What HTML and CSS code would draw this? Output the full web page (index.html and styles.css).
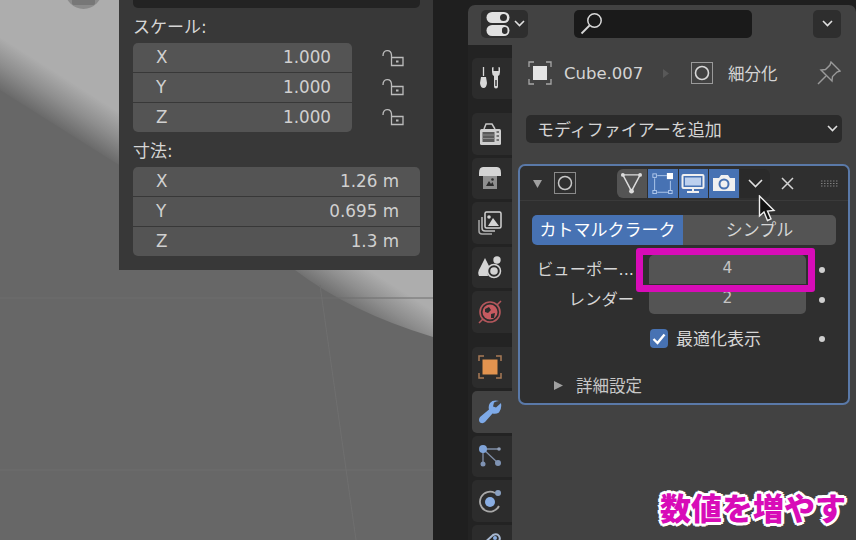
FILE: index.html
```html
<!DOCTYPE html>
<html>
<head>
<meta charset="utf-8">
<link rel="stylesheet" href="styles.css">
</head>
<body>
<div class="screen">
    <div class="viewport">
        <!-- 3D scene behind the sidebar -->
        <svg class="scene" width="433" height="540" viewBox="0 0 433 540">
            <defs>
                <linearGradient id="shade" gradientUnits="userSpaceOnUse" x1="0" y1="90" x2="24" y2="52">
                    <stop offset="0" stop-color="#6a6a6a"/>
                    <stop offset="0.5" stop-color="#8e8e8e"/>
                    <stop offset="1" stop-color="#adadad"/>
                </linearGradient>
            </defs>
            <rect width="433" height="540" fill="#676767"/>
            <path d="M0 0V90L119 165L295 270Q350 312 433 337V0Z" fill="url(#shade)"/>
            <path d="M0 298H433M0 470H433M320 285L356 540" stroke="#6f6f6f" fill="none"/>
            <circle cx="83.5" cy="-9.5" r="18.5" fill="#8b8b8b"/>
            <rect x="72" y="-6" width="23" height="11" rx="2" fill="#777"/>
        </svg>

        <div class="sidebar">
            <div class="stub"></div>
            <div class="group-label">スケール:</div>
            <div class="scale-row">
                <div class="fields fields-short">
                    <div class="num"><span>X</span><span>1.000</span></div>
                    <div class="num"><span>Y</span><span>1.000</span></div>
                    <div class="num"><span>Z</span><span>1.000</span></div>
                </div>
                <div class="locks">
                    <svg width="22" height="18" viewBox="0 0 22 18"><path d="M1 7C1 0 9 0 9.500 6V8.500M9.500 8.500H21V16.500H9.500Z" fill="none" stroke="#bcbcbc" stroke-width="1.300"/><rect x="14" y="11.500" width="2.500" height="2" fill="#bcbcbc"/></svg>
                    <svg width="22" height="18" viewBox="0 0 22 18"><path d="M1 7C1 0 9 0 9.500 6V8.500M9.500 8.500H21V16.500H9.500Z" fill="none" stroke="#bcbcbc" stroke-width="1.300"/><rect x="14" y="11.500" width="2.500" height="2" fill="#bcbcbc"/></svg>
                    <svg width="22" height="18" viewBox="0 0 22 18"><path d="M1 7C1 0 9 0 9.500 6V8.500M9.500 8.500H21V16.500H9.500Z" fill="none" stroke="#bcbcbc" stroke-width="1.300"/><rect x="14" y="11.500" width="2.500" height="2" fill="#bcbcbc"/></svg>
                </div>
            </div>
            <div class="group-label">寸法:</div>
            <div class="fields">
                <div class="num"><span>X</span><span>1.26 m</span></div>
                <div class="num"><span>Y</span><span>0.695 m</span></div>
                <div class="num"><span>Z</span><span>1.3 m</span></div>
            </div>
        </div>
    </div>

    <div class="editor">
        <div class="editor-head">
            <div class="head-btn type-btn">
                <svg width="24" height="26" viewBox="0 0 24 26"><rect x="0.500" y="1" width="23" height="11" rx="5.500" fill="#e0e0e0"/><rect x="14" y="3" width="7" height="7" rx="3.500" fill="#2e2e2e"/><rect x="0.500" y="14" width="23" height="11" rx="5.500" fill="#e0e0e0"/><rect x="16" y="16" width="5.500" height="7" rx="2.700" fill="#2e2e2e"/></svg>
                <svg width="11" height="7" viewBox="0 0 11 7"><path d="M1 1L5.500 5.500L10 1" fill="none" stroke="#e0e0e0" stroke-width="1.600"/></svg>
            </div>
            <div class="search">
                <svg width="23" height="23" viewBox="0 0 23 23"><circle cx="14.500" cy="8.500" r="6.700" fill="none" stroke="#d8d8d8" stroke-width="1.500"/><path d="M9.500 13.500L1.500 21.500" stroke="#d8d8d8" stroke-width="1.800"/></svg>
            </div>
            <div class="head-btn opt-btn">
                <svg width="11" height="7" viewBox="0 0 11 7"><path d="M1 1L5.500 5.500L10 1" fill="none" stroke="#e0e0e0" stroke-width="1.600"/></svg>
            </div>
        </div>

        <div class="editor-body">
            <div class="tabs">
                <div class="tab">
                    <svg width="24" height="24" viewBox="0 0 24 24"><path d="M5.500 1V10" stroke="#d8d8d8" stroke-width="1.300"/><path d="M3 11H8L9 17Q8.500 22 5.500 22Q2.500 22 2 17Z" fill="#d8d8d8"/><path d="M14 1.500V6Q14 9 16 10V20.500Q16 22.500 18 22.500Q20 22.500 20 20.500V10Q22 9 22 6V1.500L20.500 1V5H15.500V1Z" fill="#d8d8d8"/><rect x="17.300" y="14" width="1.400" height="6" fill="#2c2c2c"/></svg>
                </div>
                <div class="tab tab-gap">
                    <svg width="24" height="24" viewBox="0 0 24 24"><path d="M6 7L8 2H14L17 7" fill="none" stroke="#c8c8c8" stroke-width="1.500"/><rect x="2" y="7" width="21" height="16" rx="1.500" fill="#cfcfcf"/><rect x="4.500" y="10" width="12" height="10" fill="#5a5a5a"/><path d="M4.500 13H16.500M4.500 16.500H16.500" stroke="#8a8a8a"/><path d="M18.500 10H21M18.500 14H21M18.500 18H21" stroke="#5a5a5a" stroke-width="1.500"/></svg>
                </div>
                <div class="tab">
                    <svg width="24" height="24" viewBox="0 0 24 24"><path d="M1 7Q1 1 5 1H19Q23 1 23 7V10H1Z" fill="#d4d4d4"/><path d="M5 10H19V23H5Z" fill="#8f8f8f"/><path d="M8 20L11 15L13 18L14.500 16L16 20Z" fill="#2c2c2c"/><circle cx="14.500" cy="13.500" r="1.300" fill="#2c2c2c"/></svg>
                </div>
                <div class="tab">
                    <svg width="24" height="24" viewBox="0 0 24 24"><path d="M1 9V20Q1 23 4 23H14" fill="none" stroke="#a8a8a8" stroke-width="1.500"/><path d="M4 6V17Q4 20 7 20H17" fill="none" stroke="#c0c0c0" stroke-width="1.500"/><rect x="7" y="1" width="16" height="16" rx="1.500" fill="#2c2c2c" stroke="#d4d4d4" stroke-width="1.500"/><path d="M10 15L15 7L21 15Z" fill="#d4d4d4"/><circle cx="11" cy="6" r="1.800" fill="#d4d4d4"/></svg>
                </div>
                <div class="tab">
                    <svg width="24" height="24" viewBox="0 0 24 24"><path d="M7 3L12 13Q9 17 10 21H1Q-1 17 2 13Z" fill="#d4d4d4"/><circle cx="19" cy="5" r="3.700" fill="#d4d4d4"/><circle cx="16" cy="16" r="6.500" fill="#2c2c2c" stroke="#d4d4d4" stroke-width="1.500"/><circle cx="16" cy="16" r="3.800" fill="#d4d4d4"/></svg>
                </div>
                <div class="tab">
                    <svg width="24" height="24" viewBox="0 0 24 24"><circle cx="12" cy="12" r="10" fill="none" stroke="#b4575c" stroke-width="1.600"/><circle cx="12" cy="12" r="7.500" fill="#c65a60"/><path d="M7 9L11 7L13 10L10 13L7 12ZM13 14L17 13L16 18L13 18Z" fill="#2c2c2c"/><path d="M1 23L5 19M19 5L23 1" stroke="#b4575c" stroke-width="1.600"/></svg>
                </div>
                <div class="tab tab-gap">
                    <svg width="24" height="24" viewBox="0 0 24 24"><path d="M1 6V1H6M18 1H23V6M23 18V23H18M6 23H1V18" fill="none" stroke="#a87a55" stroke-width="1.500"/><rect x="4.500" y="4.500" width="15" height="15" fill="#e2934f"/></svg>
                </div>
                <div class="tab tab-active">
                    <svg width="24" height="24" viewBox="0 0 24 24"><path d="M23 3L18 7.500L15 6.500L16 2.500Q18 1 21 1Q15 -.5 12 3Q10 6 11 9.500L2 17Q0 20 2 22.500Q5 24 7 22L14.500 13.500Q18 14.500 21 12.500Q24 9 23 3Z" fill="#7eaae8"/></svg>
                </div>
                <div class="tab">
                    <svg width="24" height="24" viewBox="0 0 24 24"><path d="M5 5H21M5 5V20M5 5L20 19" stroke="#7f8da5" stroke-width="1.300"/><circle cx="5" cy="5" r="4" fill="#7fa3d8"/><circle cx="21" cy="5" r="1.800" fill="#8f9db5"/><circle cx="5" cy="20" r="2.500" fill="#7f93b3"/><circle cx="20" cy="19" r="3" fill="#7f93b3"/></svg>
                </div>
                <div class="tab">
                    <svg width="24" height="24" viewBox="0 0 24 24"><path d="M17 4A10 10 0 1 0 21 17" fill="none" stroke="#a8a8a8" stroke-width="1.800"/><circle cx="12" cy="13" r="5" fill="#8aaee2"/><circle cx="20" cy="4" r="3" fill="#8aa0c0"/></svg>
                </div>
                <div class="tab">
                    <svg width="24" height="24" viewBox="0 0 24 24"><path d="M3 13L15 2Q19 0 21 3Q23 6 20 9L8 20" fill="none" stroke="#a8b8d0" stroke-width="2"/><circle cx="17" cy="5" r="2" fill="#8aaee2"/></svg>
                </div>
            </div>

            <div class="content">
                <div class="crumbs">
                    <svg class="crumb-obj" width="24" height="24" viewBox="0 0 24 24"><path d="M1 6V1H6M18 1H23V6M23 18V23H18M6 23H1V18" fill="none" stroke="#a8a8a8" stroke-width="1.300"/><rect x="5" y="5" width="14" height="14" fill="#e4e4e4"/></svg>
                    <span class="crumb-name">Cube.007</span>
                    <svg class="crumb-sep" width="6" height="9" viewBox="0 0 6 9"><path d="M0 0L6 4.500L0 9Z" fill="#585858"/></svg>
                    <svg class="crumb-mod" width="22" height="22" viewBox="0 0 22 22"><rect x="0.500" y="0.500" width="21" height="21" fill="none" stroke="#9a9a9a"/><circle cx="11" cy="11" r="6.500" fill="none" stroke="#d8d8d8" stroke-width="1.600"/></svg>
                    <span class="crumb-label">細分化</span>
                    <svg class="pin" width="24" height="24" viewBox="0 0 24 24"><path d="M14 1L23 10L20 11L15.500 15.500L15 20L4 9L8.500 8.500L13 4Z" fill="none" stroke="#9a9a9a" stroke-width="1.400"/><path d="M9 15L1 23" stroke="#9a9a9a" stroke-width="1.400"/></svg>
                </div>

                <div class="add-mod">
                    <span>モディファイアーを追加</span>
                    <svg width="11" height="7" viewBox="0 0 11 7"><path d="M1 1L5.500 5.500L10 1" fill="none" stroke="#e0e0e0" stroke-width="1.600"/></svg>
                </div>

                <div class="mod-panel">
                    <div class="mod-head">
                        <svg class="tri-down" width="9" height="9" viewBox="0 0 9 9"><path d="M0 1H9L4.500 9Z" fill="#a0a0a0"/></svg>
                        <svg class="mod-icon" width="22" height="22" viewBox="0 0 22 22"><rect x="0.500" y="0.500" width="21" height="21" fill="none" stroke="#8a8a8a"/><circle cx="11" cy="11" r="6.500" fill="none" stroke="#c8c8c8" stroke-width="1.500"/></svg>
                        <div class="mod-btns">
                            <div class="mod-btn">
                                <svg width="23" height="23" viewBox="0 0 24 24"><path d="M3 3H21L12 20Z" fill="none" stroke="#dcdcdc" stroke-width="1.500"/><circle cx="3" cy="3" r="2" fill="#dcdcdc"/><circle cx="21" cy="3" r="2" fill="#dcdcdc"/><circle cx="12" cy="20" r="2.500" fill="#dcdcdc"/></svg>
                            </div>
                            <div class="mod-btn on">
                                <svg width="21" height="21" viewBox="0 0 24 24"><path d="M6 3H17M3 6V20M21 9V20M6 22H19" fill="none" stroke="#b8cff0"/><rect x="1" y="1" width="4" height="4" fill="none" stroke="#b8cff0"/><rect x="17" y="0" width="7" height="7" fill="#fff"/><rect x="1" y="20" width="4" height="3.500" fill="none" stroke="#b8cff0"/><rect x="19" y="20" width="4" height="3.500" fill="none" stroke="#b8cff0"/></svg>
                            </div>
                            <div class="mod-btn on">
                                <svg width="24" height="24" viewBox="0 0 24 24"><rect x="1.500" y="4" width="21" height="13" rx="1" fill="none" stroke="#f0f0f0" stroke-width="2"/><rect x="4" y="6.500" width="16" height="8" fill="#bcd0ee"/><path d="M12 17V20M6 21H18" stroke="#f0f0f0" stroke-width="2"/></svg>
                            </div>
                            <div class="mod-btn on">
                                <svg width="24" height="24" viewBox="0 0 24 24"><path d="M1 7H7L9 4H16L18 7H23V20H1Z" fill="#f0f0f0"/><circle cx="12" cy="13" r="5.500" fill="#4772b3"/><circle cx="12" cy="13" r="3.500" fill="#f0f0f0"/></svg>
                            </div>
                            <div class="mod-btn dark">
                                <svg width="15" height="9" viewBox="0 0 15 9"><path d="M1 1L7.500 7.500L14 1" fill="none" stroke="#e0e0e0" stroke-width="1.600"/></svg>
                            </div>
                        </div>
                        <svg class="mod-x" width="13" height="13" viewBox="0 0 13 13"><path d="M1 1L12 12M12 1L1 12" stroke="#d4d4d4" stroke-width="1.500"/></svg>
                        <svg class="mod-grip" width="17" height="7" viewBox="0 0 17 7"><path d="M0 1H17M0 3.500H17M0 6H17" stroke="#808080" stroke-dasharray="1.500 1.500"/></svg>
                    </div>

                    <div class="mode-tabs">
                        <div class="mode mode-on">カトマルクラーク</div>
                        <div class="mode">シンプル</div>
                    </div>

                    <div class="level-rows">
                        <div class="level-row">
                            <div class="level-label">ビューポー...</div>
                            <div class="level-field level-top marked">4</div>
                            <div class="dot"></div>
                        </div>
                        <div class="level-row">
                            <div class="level-label">レンダー</div>
                            <div class="level-field level-bottom">2</div>
                            <div class="dot"></div>
                        </div>
                    </div>

                    <div class="check-row">
                        <div class="check">
                            <svg width="14" height="12" viewBox="0 0 14 12"><path d="M1.500 6L5.500 10L12.500 1.500" fill="none" stroke="#fff" stroke-width="2.400"/></svg>
                        </div>
                        <span class="check-label">最適化表示</span>
                        <div class="dot"></div>
                    </div>

                    <div class="detail-row">
                        <svg width="9" height="9" viewBox="0 0 9 9"><path d="M0 0L9 4.500L0 9Z" fill="#a0a0a0"/></svg>
                        <span>詳細設定</span>
                    </div>
                </div>
            </div>
        </div>
    </div>

    <!-- overlays drawn over the capture -->
    <svg class="cursor" width="20" height="28" viewBox="0 0 20 28"><path d="M1.500 1V21L6 17L9.500 25.500L13 24L9.500 16L16 15.500Z" fill="#111" stroke="#eee" stroke-width="1.400"/></svg>
    <div class="caption">数値を増やす</div>
</div>
</body>
</html>
```
FILE: styles.css
```css
* {
    box-sizing: border-box;
}

html, body {
    margin: 0;
    padding: 0;
}

body {
    font-family: "DejaVu Sans", "Noto Sans CJK JP", sans-serif;
    color: #d6d6d6;
}

svg {
    display: block;
    flex: none;
}

.screen {
    width: 856px;
    height: 540px;
    position: relative;
    overflow: hidden;
    display: flex;
    background: #1f1f1f;
}

/* 3D viewport */
.viewport {
    width: 433px;
    position: relative;
    flex: none;
}

.scene {
    position: absolute;
    top: 0;
    left: 0;
}

.sidebar {
    position: absolute;
    top: 0;
    left: 119px;
    width: 314px;
    height: 270px;
    background: #383838;
    padding: 0 13px 0 14px;
}

.stub {
    height: 8px;
    background: #232323;
    border-radius: 0 0 5px 5px;
}

.group-label {
    font-size: 17px;
    line-height: 20px;
    margin: 9px 0 6px;
}

.scale-row {
    display: flex;
    gap: 30px;
}

.fields {
    display: flex;
    flex-direction: column;
    gap: 1px;
    flex: 1;
    border-radius: 5px;
    overflow: hidden;
}

.fields-short {
    flex: none;
    width: 219px;
}

.num {
    height: 29px;
    background: #545454;
    display: flex;
    align-items: center;
    justify-content: space-between;
    padding: 0 21px 2px 23px;
    font-size: 16.8px;
    color: #d0d0d0;
}

.locks {
    display: flex;
    flex-direction: column;
    justify-content: space-around;
    height: 89px;
}

/* Properties editor */
.editor {
    flex: 1;
    margin: 5px 0 0 35px;
    display: flex;
    flex-direction: column;
    min-width: 0;
}

.editor-head {
    height: 40px;
    background: #424242;
    border-radius: 7px 7px 0 0;
    display: flex;
    align-items: center;
    padding: 0 15px 3px 13px;
    flex: none;
}

.head-btn {
    height: 28px;
    background: #2e2e2e;
    border-radius: 5px;
    display: flex;
    align-items: center;
    justify-content: center;
}

.type-btn {
    width: 47px;
    gap: 4px;
    padding-left: 2px;
}

.search {
    width: 178px;
    height: 28px;
    margin-left: 46px;
    background: #1a1a1a;
    border-radius: 5px;
    display: flex;
    align-items: center;
    padding-left: 6px;
}

.opt-btn {
    width: 28px;
    margin-left: auto;
}

.editor-body {
    flex: 1;
    display: flex;
    min-height: 0;
}

.tabs {
    width: 44px;
    flex: none;
    background: #232323;
    padding: 12.5px 0 0 4px;
    display: flex;
    flex-direction: column;
    gap: 3px;
}

.tab {
    height: 41.5px;
    flex: none;
    background: #2c2c2c;
    border-radius: 5px 0 0 5px;
    display: flex;
    align-items: center;
    padding-left: 6px;
}

.tab-gap {
    margin-top: 11px;
}

.tab-active {
    background: #424242;
}

.content {
    flex: 1;
    background: #424242;
    padding: 14px 6px 0;
    min-width: 0;
}

.crumbs {
    height: 28px;
    display: flex;
    align-items: center;
    padding-left: 10px;
    font-size: 16.5px;
    color: #d4d4d4;
}

.crumb-name {
    margin-left: 12px;
    width: 99px;
}

.crumb-mod {
    margin-left: 22px;
}

.crumb-label {
    margin-left: 15px;
}

.pin {
    margin-left: auto;
    margin-right: 9px;
}

.add-mod {
    height: 28px;
    margin: 28px 8px 0;
    padding: 0 4px 2px 11px;
    background: #2b2b2b;
    border-radius: 5px;
    display: flex;
    align-items: center;
    justify-content: space-between;
    font-size: 17px;
    color: #d4d4d4;
}

.mod-panel {
    width: 332px;
    height: 241px;
    margin-top: 21px;
    background: #2f2f2f;
    border: 2px solid #5a79a8;
    border-radius: 7px;
    position: relative;
}

.mod-head {
    height: 35px;
    border-bottom: 1px solid #3a3a3a;
    display: flex;
    align-items: center;
    padding-left: 13px;
}

.mod-icon {
    margin-left: 12px;
}

.mod-btns {
    margin-left: 41px;
    width: 153px;
    height: 29px;
    display: flex;
    gap: 1px;
    border-radius: 6px;
    overflow: hidden;
}

.mod-btn {
    flex: 1;
    background: #545454;
    display: flex;
    align-items: center;
    justify-content: center;
}

.mod-btn.on {
    background: #4772b3;
}

.mod-btn.dark {
    background: #2a2a2a;
}

.mod-x {
    margin-left: 11px;
}

.mod-grip {
    margin-left: 27px;
}

.mode-tabs {
    height: 30px;
    margin: 14px 0 0 12px;
    width: 304px;
    display: flex;
    border-radius: 5px;
    overflow: hidden;
    font-size: 17px;
}

.mode {
    flex: 1;
    background: #545454;
    display: flex;
    align-items: center;
    justify-content: center;
    padding-bottom: 3px;
}

.mode-on {
    flex: none;
    width: 151px;
    background: #4772b3;
    color: #fff;
}

.level-rows {
    margin-top: 10px;
    display: flex;
    flex-direction: column;
    gap: 1px;
}

.level-row {
    height: 29px;
    display: flex;
    align-items: center;
    padding-left: 12px;
}

.level-label {
    width: 102px;
    padding-bottom: 4px;
    text-align: right;
    font-size: 16.3px;
    white-space: nowrap;
}

.level-field {
    width: 157px;
    height: 100%;
    margin-left: 15px;
    padding-bottom: 3px;
    background: #545454;
    display: flex;
    align-items: center;
    justify-content: center;
    font-size: 15.5px;
    color: #c4c4c4;
}

.level-top {
    border-radius: 5px 5px 0 0;
}

.level-bottom {
    border-radius: 0 0 5px 5px;
}

/* pink frame around the viewport level */
.marked {
    position: relative;
    z-index: 1;
}

.marked::after {
    content: "";
    position: absolute;
    top: -7px;
    right: -9px;
    bottom: -8px;
    left: -13px;
    border: 7px solid #d80cb8;
    border-radius: 3px;
}

.dot {
    width: 6px;
    height: 6px;
    margin-left: 13px;
    border-radius: 50%;
    background: #cfcfcf;
    flex: none;
}

.check-row {
    margin-top: 15px;
    height: 19px;
    display: flex;
    align-items: center;
    padding-left: 130px;
}

.check {
    width: 18px;
    height: 19px;
    background: #4772b3;
    border-radius: 4px;
    display: flex;
    align-items: center;
    justify-content: center;
    flex: none;
}

.check-label {
    margin-left: 8px;
    margin-top: -2px;
    width: 143px;
    font-size: 17px;
}

.check-row .dot {
    margin-left: 0;
}

.detail-row {
    margin-top: 27px;
    height: 20px;
    display: flex;
    align-items: center;
    padding-left: 34px;
    gap: 13px;
    font-size: 16.5px;
    color: #c8c8c8;
}

.cursor {
    position: absolute;
    left: 758px;
    top: 195px;
}

.caption {
    position: absolute;
    left: 660px;
    top: 487px;
    font-family: "Noto Sans CJK JP", sans-serif;
    font-weight: 900;
    font-size: 31px;
    line-height: 40px;
    color: #d80cb8;
    white-space: nowrap;
    text-shadow: 2px 0 0 #fff, -2px 0 0 #fff, 0 2px 0 #fff, 0 -2px 0 #fff,
        2px 2px 0 #fff, -2px 2px 0 #fff, 2px -2px 0 #fff, -2px -2px 0 #fff,
        3px 0 0 #fff, -3px 0 0 #fff, 0 3px 0 #fff, 0 -3px 0 #fff;
}
```
